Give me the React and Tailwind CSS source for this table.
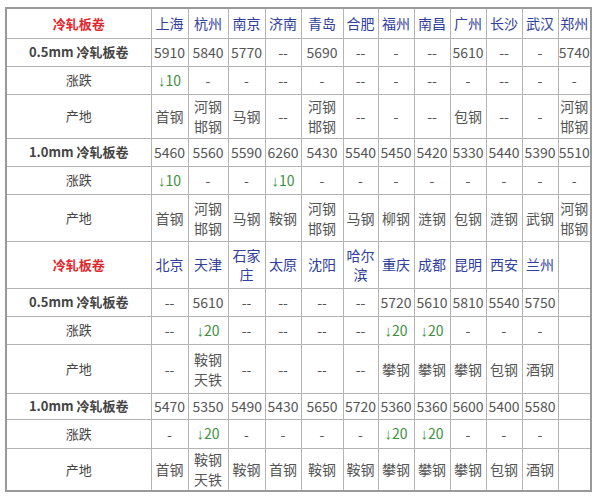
import React from 'react';

const colWidths = ['w-[145px]', 'w-[37px]', 'w-[40px]', 'w-[37px]', 'w-[36px]', 'w-[42px]', 'w-[35px]', 'w-[36px]', 'w-[36px]', 'w-[36px]', 'w-[36px]', 'w-[36px]', 'w-[33px]'];

const block1 = {
    cities: ['上海', '杭州', '南京', '济南', '青岛', '合肥', '福州', '南昌', '广州', '长沙', '武汉', '郑州'],
    headH: 'h-[30px]',
    rows: [
        { label: '0.5mm 冷轧板卷', bold: true, h: 'h-[28px]', cells: ['5910', '5840', '5770', '--', '5690', '--', '-', '--', '5610', '--', '-', '5740'] },
        { label: '涨跌', h: 'h-[28px]', cells: ['↓10', '-', '-', '--', '-', '--', '-', '--', '-', '--', '-', '-'] },
        { label: '产地', h: 'h-[44px]', cells: ['首钢', '河钢\n邯钢', '马钢', '--', '河钢\n邯钢', '--', '-', '--', '包钢', '--', '-', '河钢\n邯钢'] },
        { label: '1.0mm 冷轧板卷', bold: true, h: 'h-[28px]', cells: ['5460', '5560', '5590', '6260', '5430', '5540', '5450', '5420', '5330', '5440', '5390', '5510'] },
        { label: '涨跌', h: 'h-[28px]', cells: ['↓10', '-', '-', '↓10', '-', '-', '-', '-', '-', '-', '-', '-'] },
        { label: '产地', h: 'h-[47px]', cells: ['首钢', '河钢\n邯钢', '马钢', '鞍钢', '河钢\n邯钢', '马钢', '柳钢', '涟钢', '包钢', '涟钢', '武钢', '河钢\n邯钢'] },
    ],
};

const block2 = {
    cities: ['北京', '天津', '石家\n庄', '太原', '沈阳', '哈尔\n滨', '重庆', '成都', '昆明', '西安', '兰州', ''],
    headH: 'h-[47px]',
    rows: [
        { label: '0.5mm 冷轧板卷', bold: true, h: 'h-[28px]', cells: ['--', '5610', '--', '--', '--', '--', '5720', '5610', '5810', '5540', '5750', ''] },
        { label: '涨跌', h: 'h-[28px]', cells: ['--', '↓20', '--', '--', '--', '--', '↓20', '↓20', '-', '-', '-', ''] },
        { label: '产地', h: 'h-[49px]', cells: ['--', '鞍钢\n天铁', '--', '--', '--', '--', '攀钢', '攀钢', '攀钢', '包钢', '酒钢', ''] },
        { label: '1.0mm 冷轧板卷', bold: true, h: 'h-[26px]', cells: ['5470', '5350', '5490', '5430', '5650', '5720', '5360', '5360', '5600', '5400', '5580', ''] },
        { label: '涨跌', h: 'h-[29px]', cells: ['-', '↓20', '-', '-', '-', '-', '↓20', '↓20', '-', '-', '-', ''] },
        { label: '产地', h: 'h-[43px]', cells: ['首钢', '鞍钢\n天铁', '鞍钢', '首钢', '鞍钢', '鞍钢', '攀钢', '攀钢', '攀钢', '包钢', '酒钢', ''] },
    ],
};

function Value({ v }) {
    if (v.startsWith('↓')) {
        return (
            <span className="text-[#3d8f3d]">
                <span className="font-['Liberation_Sans','DejaVu_Sans',sans-serif] text-[15px]">↓</span>
                {v.slice(1)}
            </span>
        );
    }
    return v;
}

function Block({ data }) {
    return (
        <>
            <tr className={data.headH}>
                <td className="border border-[#b4b4b4] text-center font-bold text-[13px] text-[#e0282e]">冷轧板卷</td>
                {data.cities.map((c, i) => (
                    <td key={i} className="border border-[#b4b4b4] text-center text-[14px] leading-[19px] text-[#30409c] whitespace-pre-line">{c}</td>
                ))}
            </tr>
            {data.rows.map((r, ri) => (
                <tr key={ri} className={r.h}>
                    <td className={`border border-[#b4b4b4] text-center text-[13px] text-[#444] ${r.bold ? 'font-bold' : ''}`}>{r.label}</td>
                    {r.cells.map((v, ci) => (
                        <td key={ci} className="border border-[#b4b4b4] text-center text-[14px] leading-[20px] whitespace-pre-line text-[#555]">
                            <Value v={v} />
                        </td>
                    ))}
                </tr>
            ))}
        </>
    );
}

export default function App() {
    return (
        <div className="w-[600px] h-[496px] bg-white pt-[7px] pl-[5px] overflow-hidden font-['Noto_Sans_CJK_SC','Noto_Sans',sans-serif]">
            <table className="border-collapse table-fixed w-[585px] border-2 border-[#999]">
                <colgroup>
                    {colWidths.map((w, i) => <col key={i} className={w} />)}
                </colgroup>
                <tbody>
                    <Block data={block1} />
                    <Block data={block2} />
                </tbody>
            </table>
        </div>
    );
}
